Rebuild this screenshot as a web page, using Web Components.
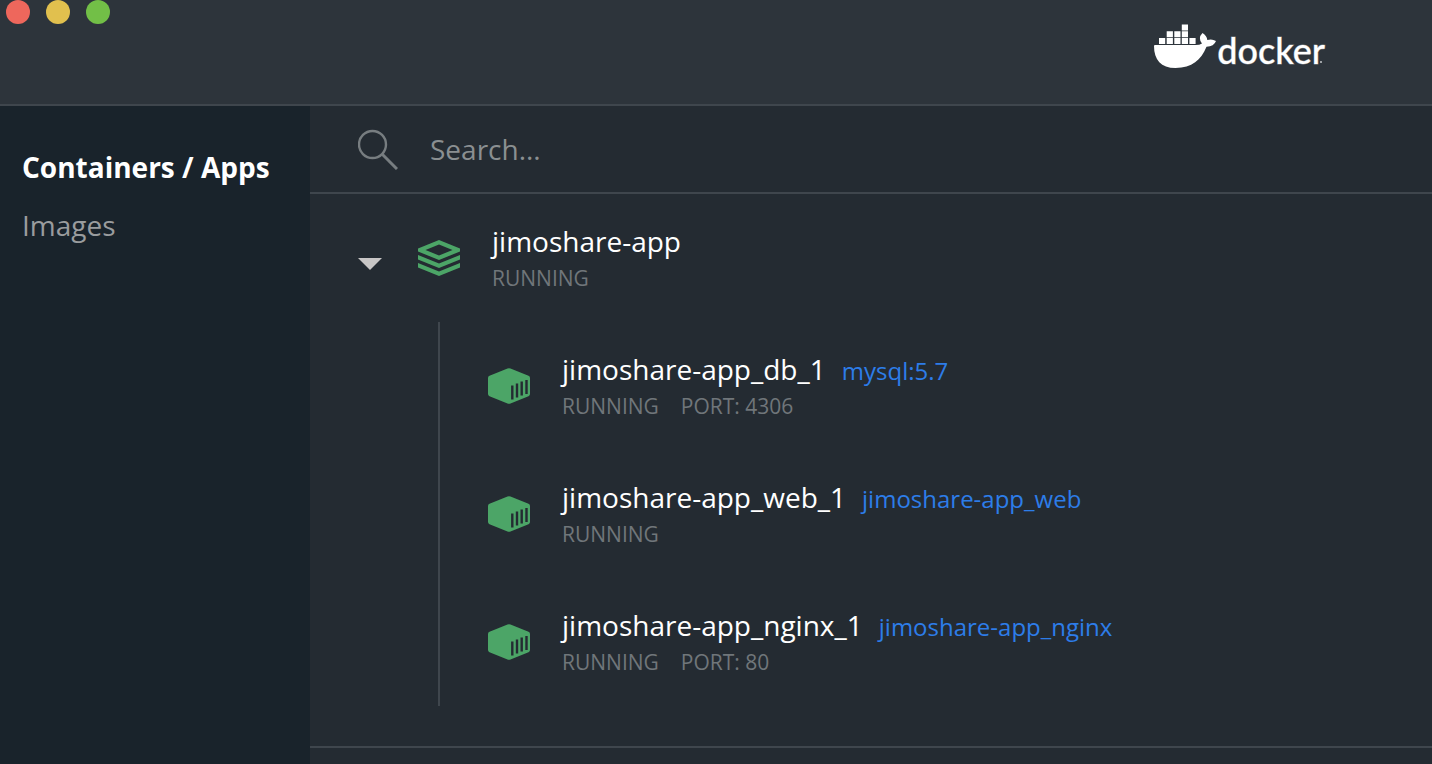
<!DOCTYPE html>
<html lang="en">
<head>
<meta charset="utf-8">
<title>Docker Dashboard</title>
<style>
html, body { height: 100%; }
body { margin: 0; background: #242b32; font-family: "Open Sans", sans-serif; color: #fff; --line: #3f464d; --muted: #70767a; --green: #4ca567; }
</style>
</head>
<body>
<docker-dashboard>
  <title-bar slot="header"></title-bar>
  <side-nav slot="nav">
    <nav-item current>Containers / Apps</nav-item>
    <nav-item>Images</nav-item>
  </side-nav>
  <search-bar></search-bar>
  <app-group name="jimoshare-app" status="RUNNING">
    <container-row name="jimoshare-app_db_1" image="mysql:5.7" status="RUNNING" port="PORT: 4306"></container-row>
    <container-row name="jimoshare-app_web_1" image="jimoshare-app_web" status="RUNNING"></container-row>
    <container-row name="jimoshare-app_nginx_1" image="jimoshare-app_nginx" status="RUNNING" port="PORT: 80"></container-row>
  </app-group>
</docker-dashboard>
<script>
const define = (name, markup, setup) => customElements.define(name, class extends HTMLElement {
  constructor() {
    super();
    this.attachShadow({ mode: 'open' }).innerHTML = markup;
  }
  connectedCallback() { if (setup) setup(this, this.shadowRoot); }
});

define('docker-dashboard', `
<style>
:host { display: flex; flex-direction: column; min-height: 100%; }
.body { display: flex; flex: 1; }
main { flex: 1; min-width: 0; }
</style>
<slot name="header"></slot>
<div class="body"><slot name="nav"></slot><main><slot></slot></main></div>`);

define('title-bar', `
<style>
:host { display: block; border-bottom: 2px solid var(--line); background: #2d343b; }
header { display: flex; justify-content: space-between; align-items: flex-start; height: 104px; padding: 0 107px 0 6px; box-sizing: border-box; }
.lights { display: flex; gap: 16px; }
button { width: 24px; height: 24px; border: 0; padding: 0; border-radius: 50%; background: #ee675c; }
.min { background: #e1c04e; }
.max { background: #72bf47; }
.logo { display: flex; position: relative; margin-top: 24px; gap: 1px; }
.word { font: 500 36px/52px Lato, sans-serif; -webkit-text-stroke: 1px rgba(255, 255, 255, .4); }
.mark { position: absolute; right: 3px; top: 37px; width: 2px; height: 2px; background: #9da1a5; }
</style>
<header>
  <div class="lights">
    <button class="close" aria-label="Close"></button>
    <button class="min" aria-label="Minimize"></button>
    <button class="max" aria-label="Zoom"></button>
  </div>
  <div class="logo">
    <svg width="62" height="45" viewBox="0 0 62 45" fill="#fff" aria-hidden="true">
      <path d="M0 22Q0 21 1 21H42Q45.500 21 48 19.500Q43.500 14 48.500 9Q53 12 53.300 16Q58 14.500 62 17Q60 22.500 52.500 22.800C47 36 38 44 21.500 44C7 44 0 36 0 22Z"/>
      <path d="M5 14h6.200v6H5zM12.700 14h6.200v6h-6.200zM20.300 14h6.200v6h-6.200zM27.800 14h6.200v6h-6.200zM35.400 14h6.200v6h-6.200zM12.700 7.200h6.200v6h-6.200zM20.300 7.200h6.200v6h-6.200zM27.800 7.200h6.200v6h-6.200zM27.800 .4h6.200v6h-6.200z"/>
    </svg>
    <span class="word">docker</span><span class="mark"></span>
  </div>
</header>`);

define('side-nav', `
<style>
:host { display: block; flex: none; width: 310px; box-sizing: border-box; padding: 32px 22px; background: #19232b; }
nav { display: flex; flex-direction: column; }
</style>
<nav><slot></slot></nav>`);

define('nav-item', `
<style>
:host { display: block; font-size: 28px; line-height: 58px; color: #999c9e; white-space: nowrap; }
:host([current]) { font-weight: 700; color: #fff; }
a { color: inherit; text-decoration: none; }
</style>
<a href="#"><slot></slot></a>`);

define('search-bar', `
<style>
:host { display: block; border-bottom: 2px solid var(--line); }
label { display: flex; align-items: center; gap: 32px; height: 86px; padding: 0 48px; }
svg { flex: none; }
input { flex: 1; min-width: 0; height: 48px; padding: 0; border: 0; outline: 0; background: none; color: #fff; font: 28px "Open Sans", sans-serif; }
input::placeholder { color: #8a8f91; opacity: 1; }
</style>
<label>
  <svg width="40" height="42" viewBox="0 -2 40 42" fill="none" stroke="#777d80" aria-hidden="true">
    <circle cx="14.500" cy="14.500" r="13.500" stroke-width="2.400"/><path d="M24.500 24.500L39 39" stroke-width="3"/>
  </svg>
  <input type="text" placeholder="Search..." aria-label="Search">
</label>`);

const rowText = `
.text { display: flex; flex-direction: column; min-width: 0; white-space: nowrap; }
.title { display: flex; align-items: baseline; gap: 16px; font-size: 28px; line-height: 40px; }
.meta { display: flex; gap: 22px; font-size: 21px; line-height: 34px; color: var(--muted); }
svg { flex: none; }`;

const fill = (host, root) => {
  for (const el of root.querySelectorAll('[data-from]')) {
    const value = host.getAttribute(el.dataset.from);
    if (value) el.textContent = value; else el.remove();
  }
};

define('app-group', `
<style>${rowText}
:host { display: block; padding-bottom: 40px; border-bottom: 2px solid var(--line); }
.head { display: flex; align-items: center; height: 128px; padding-left: 48px; }
button { display: flex; width: 24px; height: 12px; margin: 12px 36px 0 0; padding: 0; border: 0; background: none; }
.text { margin-left: 32px; }
.list { margin-left: 128px; border-left: 2px solid var(--line); }
</style>
<div class="head">
  <button aria-label="Collapse" aria-expanded="true"><svg width="24" height="12" viewBox="0 0 24 12"><path d="M0 0H24L12 12Z" fill="#c8c6c6"/></svg></button>
  <svg width="42" height="36" viewBox="0 0 42 36" fill="var(--green)" aria-hidden="true">
    <path fill-rule="evenodd" d="M21 0L42 8.500V11.500L21 20L0 11.500V8.500ZM21 4.500L7.500 10L21 15.500L34.500 10Z"/>
    <path d="M0 15L21 23.500L42 15V19.500L21 28L0 19.500ZM0 23L21 31.500L42 23V27.500L21 36L0 27.500Z"/>
  </svg>
  <div class="text"><div class="title"><span data-from="name"></span></div><div class="meta"><span data-from="status"></span></div></div>
</div>
<div class="list"><slot></slot></div>`, fill);

define('container-row', `
<style>${rowText}
:host { display: flex; align-items: center; gap: 32px; height: 128px; padding-left: 48px; }
a { font-size: 24px; line-height: 32px; color: #2d7de9; text-decoration: none; }
</style>
<svg width="42" height="36" viewBox="0 0 42 36" aria-hidden="true">
  <path d="M19.500 .6Q21 0 22.500 .6L40.500 7.800Q42 8.400 42 10V26Q42 27.600 40.500 28.200L22.500 35.400Q21 36 19.500 35.400L1.500 28.200Q0 27.600 0 26V10Q0 8.400 1.500 7.800Z" fill="var(--green)"/>
  <path d="M24.300 17.500V31.500M29 15.500V29.500M33.700 13.500V27.500M38.500 12V26" stroke="#242b32" stroke-width="2.400"/>
</svg>
<div class="text">
  <div class="title"><span data-from="name"></span><a href="#" data-from="image"></a></div>
  <div class="meta"><span data-from="status"></span><span data-from="port"></span></div>
</div>`, fill);
</script>
</body>
</html>
